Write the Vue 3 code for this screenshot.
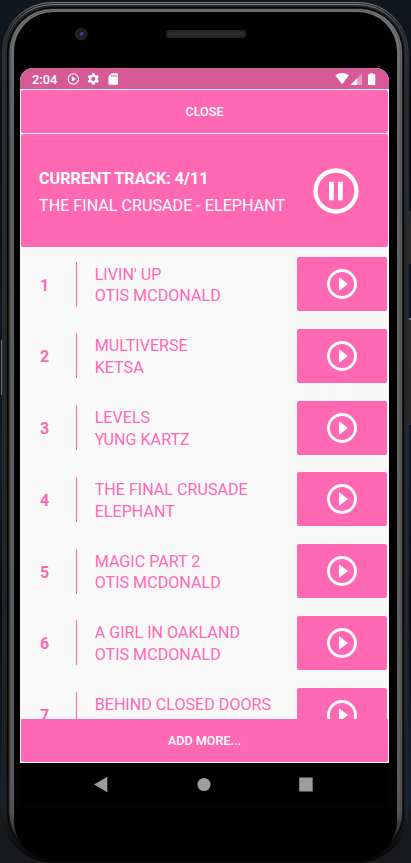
<script setup>
const tracks = [
  { title: "LIVIN' UP", artist: 'OTIS MCDONALD' },
  { title: 'MULTIVERSE', artist: 'KETSA' },
  { title: 'LEVELS', artist: 'YUNG KARTZ' },
  { title: 'THE FINAL CRUSADE', artist: 'ELEPHANT' },
  { title: 'MAGIC PART 2', artist: 'OTIS MCDONALD' },
  { title: 'A GIRL IN OAKLAND', artist: 'OTIS MCDONALD' },
  { title: 'BEHIND CLOSED DOORS', artist: '' },
]
</script>

<template>
  <div class="device">
    <svg class="frame" viewBox="0 0 411 863" aria-hidden="true">
      <defs>
        <linearGradient id="rim" x1="0" y1="0" x2="0" y2="1">
          <stop offset="0" stop-color="#77797a" />
          <stop offset=".15" stop-color="#606264" />
          <stop offset=".9" stop-color="#5c5d5f" />
          <stop offset=".95" stop-color="#555657" />
          <stop offset=".983" stop-color="#101010" />
          <stop offset="1" stop-color="#010101" />
        </linearGradient>
        <linearGradient id="edge" x1="0" y1="0" x2="0" y2="1">
          <stop offset="0" stop-color="#808385" />
          <stop offset=".035" stop-color="#343637" />
          <stop offset=".94" stop-color="#222324" />
          <stop offset="1" stop-color="#080808" />
        </linearGradient>
        <linearGradient id="body" x1="0" y1="0" x2="0" y2="1">
          <stop offset="0" stop-color="#242526" />
          <stop offset=".94" stop-color="#1c1d1e" />
          <stop offset="1" stop-color="#050505" />
        </linearGradient>
        <linearGradient id="desk" x1="0" y1="0" x2="0" y2="1">
          <stop offset="0" stop-color="#101820" />
          <stop offset=".13" stop-color="#080d14" />
          <stop offset=".28" stop-color="#07111e" />
          <stop offset=".55" stop-color="#0c1b34" />
          <stop offset=".7" stop-color="#050a12" />
          <stop offset=".93" stop-color="#10243f" />
          <stop offset=".94" stop-color="#17191d" />
          <stop offset="1" stop-color="#17191d" />
        </linearGradient>
      </defs>
      <rect width="411" height="863" fill="url(#desk)" />
      <rect x="1" y="340" width="1" height="55" fill="#6a6b6c" />
      <rect x="408" y="211" width="3" height="53" fill="#29292a" />
      <rect x="408" y="318" width="3" height="107" fill="#29292a" />
      <rect x="409" y="318" width="2" height="2" fill="#777" />
      <rect x="2" y="2" width="406.5" height="860.5" rx="50" fill="url(#body)" />
      <rect x="2.5" y="2.5" width="405.5" height="859.5" rx="49.5" fill="none" stroke="url(#edge)" />
      <rect x="4.5" y="4.5" width="401.5" height="855.5" rx="48" fill="none" stroke="url(#edge)" />
      <rect x="7.5" y="7.5" width="396" height="850" rx="45" fill="#151617" stroke="#050505" />
      <rect x="9.5" y="9" width="392.5" height="847" rx="43" fill="url(#rim)" />
      <rect x="11" y="10.5" width="389.5" height="845" rx="42" fill="none" stroke="#424446" stroke-opacity=".6" />
      <rect x="14" y="12" width="383" height="848" rx="39" fill="#020202" />
      <path d="M30 845 Q205 850 381 845 L350 861 H60Z" fill="#020202" />
      <circle cx="81.3" cy="34" r="6.3" fill="#202021" />
      <circle cx="81.3" cy="34" r="3.6" fill="#151a38" />
      <circle cx="81.3" cy="34" r="1.8" fill="#303e70" />
      <circle cx="82" cy="33" r=".7" fill="#7580a4" />
      <rect x="166" y="30" width="80" height="8" rx="3.5" fill="#202122" />
      <rect x="168" y="31.5" width="76" height="5" rx="2" fill="#292a2b" />
    </svg>

    <main class="screen">
      <header class="status">
        <time>2:04</time>
        <svg class="status-left" viewBox="0 0 54 14">
          <circle cx="7.3" cy="7" r="5.2" fill="none" stroke="#fff" stroke-width="1.1" />
          <path d="M5.800 4.300v5.400L9.900 7z" fill="#fff" />
          <path transform="translate(18.7 -1) scale(.66)" fill="#fff" d="M19.400 13c.1-.6.1-1.400 0-2l2.100-1.600-2-3.500-2.500 1a8 8 0 0 0-1.700-1L15 3.300h-4l-.4 2.600a8 8 0 0 0-1.700 1l-2.500-1-2 3.500L6.500 11a8 8 0 0 0 0 2l-2.100 1.600 2 3.500 2.500-1a8 8 0 0 0 1.700 1l.4 2.600h4l.4-2.600a8 8 0 0 0 1.700-1l2.500 1 2-3.500zM13 15.200A3.200 3.200 0 1 1 13 8.800a3.200 3.200 0 0 1 0 6.400z" />
          <path fill-rule="evenodd" fill="#fff" d="M45.500 1.200h5.500a1 1 0 0 1 1 1v9.600a1 1 0 0 1-1 1h-7.500a1 1 0 0 1-1-1V4.500zM45.500 3v2h1V3zm2 0v2h1V3zm2 0v2h1V3z" />
        </svg>
        <svg class="status-right" viewBox="0 0 42 14">
          <path d="M.3 3.300Q7 -1.300 13.900 3.300L7.100 12.300z" fill="#fff" />
          <path d="M27 1.500V13H15.500z" fill="#e59abf" />
          <path d="M22.200 6.300V13h-6.700z" fill="#fff" />
          <path d="M35 1.300h3v1h1.500q.8 0 .8.800v9.200q0 .8-.8.800h-5.700q-.8 0-.8-.8V3.100q0-.8.8-.8H35z" fill="#fff" />
        </svg>
      </header>

      <button class="close">CLOSE</button>

      <section class="current">
        <div>
          <h1>CURRENT TRACK: 4/11</h1>
          <p>THE FINAL CRUSADE - ELEPHANT</p>
        </div>
        <svg viewBox="0 0 46 46">
          <circle cx="23" cy="23" r="20.5" fill="none" stroke="#fff" stroke-width="4.3" />
          <path d="M16 13.700h4.800v18.600H16zM25 13.700h4.800v18.600H25z" fill="#fff" />
        </svg>
      </section>

      <section class="list">
        <article v-for="(track, index) in tracks" :key="track.title" class="track">
          <strong>{{ index + 1 }}</strong>
          <i class="divider"></i>
          <div class="names">
            <span>{{ track.title }}</span>
            <span v-if="track.artist">{{ track.artist }}</span>
          </div>
          <button class="play" :aria-label="track.title">
            <svg viewBox="0 0 30 30">
              <circle cx="15" cy="15" r="13.5" fill="none" stroke="#fff" stroke-width="2.8" />
              <path d="M12 8.200v13.600L21 15z" fill="#fff" />
            </svg>
          </button>
        </article>
      </section>

      <button class="add">ADD MORE...</button>
      <nav class="navigation">
        <svg viewBox="0 0 369 43">
          <path d="M74 21.500 87.300 13.700v15.600z" fill="#9d9d9d" />
          <circle cx="184" cy="21.500" r="6.600" fill="#9d9d9d" />
          <rect x="279.200" y="14.500" width="13.500" height="14" rx=".5" fill="#9d9d9d" />
        </svg>
      </nav>
    </main>
  </div>
</template>

<style>
body { margin: 0; overflow: hidden; background: #10151c; }
</style>

<style scoped>
* { box-sizing: border-box; }
.device {
  position: relative;
  width: 411px;
  height: 863px;
  padding: 68px 22px 57px 20px;
  overflow: hidden;
  font-family: Roboto, sans-serif;
}
.frame { position: absolute; inset: 0; width: 411px; height: 863px; }
.screen {
  position: relative;
  display: flex;
  flex-direction: column;
  width: 369px;
  height: 738px;
  overflow: hidden;
  border-radius: 13px 13px 0 0;
  background: linear-gradient(#f9f9f9 0 695px, #000 695px);
}
button { margin: 0; padding: 0; border: 0; color: #fff; font-family: inherit; }
.status {
  display: flex;
  flex: none;
  align-items: center;
  height: 21px;
  padding: 0 12px;
  color: #fff;
  background: #d65a96;
}
time { width: 34px; padding-top: 1px; font-size: 12.800px; font-weight: 500; line-height: 21px; }
.status-left { width: 54px; height: 14px; }
.status-right { width: 42px; height: 14px; margin-left: auto; }
.close {
  flex: none;
  height: 43px;
  margin: 1px 1px 0;
  border-radius: 2px;
  background: #ff69b4;
  font-size: 12.600px;
  font-weight: 500;
}
.current {
  display: flex;
  flex: none;
  justify-content: space-between;
  height: 113px;
  margin: 1px 1px 0;
  padding: 34px 29.500px 0 18px;
  border-radius: 2px;
  color: #fff;
  background: #ff69b4;
}
h1, p { margin: 0; white-space: nowrap; line-height: 21px; }
h1 { font-size: 16.150px; font-weight: 700; }
p { margin-top: 6px; font-size: 16.150px; }
.current svg { flex: none; width: 46px; height: 46px; }
.list { flex: none; height: 472px; padding-top: 1.300px; overflow: hidden; }
.track {
  display: flex;
  align-items: center;
  height: 71.750px;
  padding: 0 1.700px 0 20px;
  color: #ff69b4;
}
strong { width: 35.500px; padding-top: 2px; font-size: 16px; font-weight: 700; }
.divider { flex: none; width: 1.500px; height: 45px; background: #ff69b4; }
.names {
  display: flex;
  flex: 1;
  flex-direction: column;
  height: 45px;
  padding: 2px 0 0 17.700px;
  font-size: 16.120px;
  line-height: 21.600px;
  white-space: nowrap;
}
.play {
  display: grid;
  flex: none;
  place-items: center;
  width: 90px;
  height: 54px;
  border-radius: 2px;
  background: #ff69b4;
}
.play svg { width: 30px; height: 30px; }
.add {
  flex: none;
  height: 42.500px;
  margin: 0 1px;
  padding-top: 1px;
  border-radius: 0 0 2px 2px;
  background: #ff69b4;
  font-size: 12.600px;
  font-weight: 500;
}
.navigation { flex: none; height: 43px; margin-top: 1.500px; background: #000; }
.navigation svg { display: block; width: 369px; height: 43px; }
</style>
